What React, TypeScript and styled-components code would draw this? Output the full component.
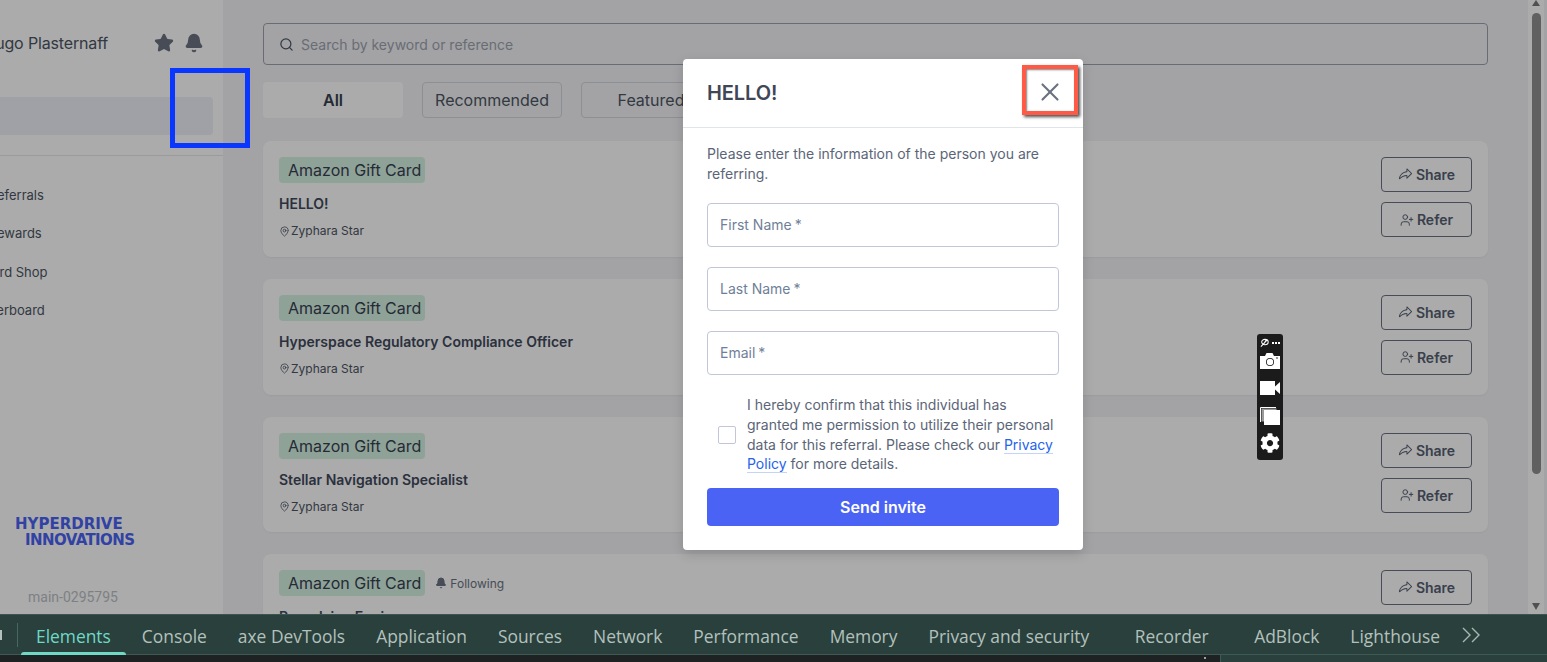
import React from 'react';
import styled, { createGlobalStyle } from 'styled-components';
import { Search, MapPin, UserPlus, X, Star, Bell } from 'lucide-react';
import { PiShareFat } from 'react-icons/pi';
import { FaCog } from 'react-icons/fa';

const GlobalStyle = createGlobalStyle`
	html, body {
		margin: 0;
		padding: 0;
		height: 100%;
		overflow: hidden;
		font-family: Inter, "Liberation Sans", sans-serif;
	}
	#root { height: 100%; }
	* { box-sizing: border-box; }
`;

type Job = { title: string; following?: boolean };

const jobs: Job[] = [
	{ title: 'HELLO!' },
	{ title: 'Hyperspace Regulatory Compliance Officer' },
	{ title: 'Stellar Navigation Specialist' },
	{ title: 'Propulsion Engineer', following: true },
];

const navItems = ['My Referrals', 'My Rewards', 'Reward Shop', 'Leaderboard'];
const fields = ['First Name', 'Last Name', 'Email'];
const tabs = ['Elements', 'Console', 'axe DevTools', 'Application', 'Sources', 'Network', 'Performance', 'Memory', 'Privacy and security', 'Recorder', 'AdBlock', 'Lighthouse'];

export default function App() {
	return (
		<Page>
			<GlobalStyle />
			<Viewport>
				<Sidebar>
					<SidebarInner>
						<UserRow>
							<UserName>Hugo Plasternaff</UserName>
							<UserIcons>
								<Star size={20} fill="#6b7280" stroke="#6b7280" />
								<Bell size={20} fill="#6b7280" stroke="#6b7280" />
							</UserIcons>
						</UserRow>
						<ActiveNav />
						<SideRule />
						<NavList>
							{navItems.map((item) => (
								<NavItem key={item}>{item}</NavItem>
							))}
						</NavList>
						<SideFooter>
							<Logo>
								<LogoLine>HYPERDRIVE</LogoLine>
								<LogoLine $indent>INNOVATIONS</LogoLine>
							</Logo>
							<Version>main-0295795</Version>
						</SideFooter>
					</SidebarInner>
				</Sidebar>
				<Main>
					<SearchBox>
						<Search size={15} color="#4b5563" strokeWidth={2} />
						<span>Search by keyword or reference</span>
					</SearchBox>
					<FilterRow>
						<FilterTab $active>All</FilterTab>
						<FilterTab>Recommended</FilterTab>
						<FilterTab>Featured</FilterTab>
					</FilterRow>
					<CardList>
						{jobs.map((job) => (
							<Card key={job.title}>
								<CardText>
									<TagRow>
										<Tag>Amazon Gift Card</Tag>
										{job.following && (
											<Following>
												<Bell size={12} fill="#6b7280" stroke="#6b7280" />
												Following
											</Following>
										)}
									</TagRow>
									<JobTitle>{job.title}</JobTitle>
									<JobPlace>
										<MapPin size={11} strokeWidth={1.7} />
										Zyphara Star
									</JobPlace>
								</CardText>
								<CardActions>
									<ActionButton>
										<PiShareFat size={15} />
										Share
									</ActionButton>
									<ActionButton>
										<UserPlus size={14} strokeWidth={1.7} />
										Refer
									</ActionButton>
								</CardActions>
							</Card>
						))}
					</CardList>
				</Main>
				<ScrollTrack>
					<ScrollArrow $up />
					<ScrollThumb />
					<ScrollArrow />
				</ScrollTrack>
				<Backdrop />
				<BlueMark />
				<Modal>
					<ModalHeader>
						<ModalTitle>HELLO!</ModalTitle>
						<CloseMark>
							<X size={30} color="#6b7280" strokeWidth={1.7} />
						</CloseMark>
					</ModalHeader>
					<ModalBody>
						<Intro>Please enter the information of the person you are referring.</Intro>
						<FieldStack>
							{fields.map((field) => (
								<Field key={field}>
									{field}
									<Required>*</Required>
								</Field>
							))}
						</FieldStack>
						<ConsentRow>
							<CheckBox />
							<ConsentText>
								I hereby confirm that this individual has granted me permission to utilize their personal data for this referral. Please check our <PolicyLink>Privacy Policy</PolicyLink> for more details.
							</ConsentText>
						</ConsentRow>
						<SendButton>Send invite</SendButton>
					</ModalBody>
				</Modal>
				<CaptureBar>
					<CaptureTop>
						<svg width="9" height="9" viewBox="0 0 10 10" fill="none" stroke="#fff" strokeWidth="1.2">
							<ellipse cx="5.5" cy="4.5" rx="3.6" ry="3" />
							<path d="M1 9.5 8 2M4 7l3-5" />
						</svg>
						<CaptureDots>
							<i />
							<i />
							<i />
						</CaptureDots>
					</CaptureTop>
					<CaptureCell>
						<svg width="20" height="16" viewBox="0 0 20 16" fill="#fff">
							<path d="M0 3h5l1.5-3h6L14 3h6v13H0z" />
							<circle cx="10" cy="9" r="4" fill="#1b1b1b" />
							<circle cx="10" cy="9" r="3.2" fill="#fff" />
							<circle cx="17" cy="5" r="0.8" fill="#1b1b1b" />
						</svg>
					</CaptureCell>
					<CaptureCell>
						<svg width="20" height="14" viewBox="0 0 20 14" fill="#fff">
							<rect x="0" y="0" width="15" height="14" />
							<path d="M15 5.5 20 1v12l-5-4.5z" />
						</svg>
					</CaptureCell>
					<CaptureCell>
						<svg width="20" height="18" viewBox="0 0 20 18">
							<path d="M0.5 15V0.5H16" fill="none" stroke="#fff" />
							<rect x="1.5" y="1.5" width="15" height="13" fill="#9a9a9a" />
							<rect x="4" y="3" width="16" height="15" fill="#fff" />
						</svg>
					</CaptureCell>
					<CaptureCell>
						<FaCog size={20} color="#fff" />
					</CaptureCell>
				</CaptureBar>
			</Viewport>
			<DevTools>
				<TabBar>
					<TabStub />
					<TabDivider />
					{tabs.map((tab, index) => (
						<DevTab key={tab} $active={index === 0} $wide={tab === 'Recorder'}>
							{tab}
						</DevTab>
					))}
					<MoreTabs>
						<svg width="20" height="16" viewBox="0 0 20 16" fill="none" stroke="#a9b7b2" strokeWidth="1.4">
							<path d="M2 1l7 7-7 7M11 1l7 7-7 7" />
						</svg>
					</MoreTabs>
				</TabBar>
				<DevPanels>
					<ConsolePane />
					<SidePane />
				</DevPanels>
			</DevTools>
		</Page>
	);
}

const Page = styled.div`
	display: flex;
	flex-direction: column;
	width: 1547px;
	height: 662px;
	overflow: hidden;
`;

const Viewport = styled.div`
	position: relative;
	display: flex;
	height: 614px;
	overflow: hidden;
	flex-shrink: 0;
	background: #f3f4f6;
`;

const Sidebar = styled.aside`
	width: 223px;
	flex-shrink: 0;
	background: #fff;
	overflow: hidden;
`;

const SidebarInner = styled.div`
	display: flex;
	flex-direction: column;
	width: 263px;
	height: 100%;
	margin-left: -40px;
`;

const UserRow = styled.div`
	display: flex;
	align-items: center;
	justify-content: space-between;
	height: 86px;
	padding: 0 19px 0 23.4px;
`;

const UserName = styled.div`
	font-size: 16px;
	letter-spacing: -0.15px;
	color: #4b5563;
`;

const UserIcons = styled.div`
	display: flex;
	gap: 10px;
`;

const ActiveNav = styled.div`
	height: 38px;
	margin: 11px 10px 0 0;
	border-radius: 4px;
	background: #eef0fa;
`;

const SideRule = styled.div`
	height: 1px;
	margin-top: 20px;
	background: #e5e7eb;
`;

const NavList = styled.div`
	display: flex;
	flex-direction: column;
	padding-top: 20px;
`;

const NavItem = styled.div`
	height: 38.4px;
	line-height: 38px;
	font-size: 13px;
	color: #4b5563;
	margin-left: 6px;
`;

const SideFooter = styled.div`
	display: flex;
	flex-direction: column;
	flex: 1;
	justify-content: flex-end;
`;

const Logo = styled.div`
	display: flex;
	flex-direction: column;
	margin-left: 55px;
	margin-bottom: 41px;
	color: #4a63f5;
`;

const LogoLine = styled.div<{ $indent?: boolean }>`
	font-family: 'DejaVu Sans', sans-serif;
	font-weight: 700;
	font-size: 15px;
	line-height: 16px;
	letter-spacing: ${(p) => (p.$indent ? '-0.6px' : '0')};
	margin-left: ${(p) => (p.$indent ? '10px' : '0')};
`;

const Version = styled.div`
	font-family: Roboto, sans-serif;
	font-size: 14px;
	line-height: 16px;
	margin: 0 0 9px 68px;
	color: #bbbfc6;
`;

const Main = styled.main`
	flex: 1;
	min-width: 0;
	padding: 23px 40px 0;
`;

const SearchBox = styled.div`
	display: flex;
	align-items: center;
	gap: 7px;
	height: 42px;
	padding-left: 15px;
	border: 1px solid #9ca3af;
	border-radius: 4px;
	font-size: 14px;
	color: #9ca3af;
`;

const FilterRow = styled.div`
	display: flex;
	gap: 19px;
	margin-top: 17px;
`;

const FilterTab = styled.div<{ $active?: boolean }>`
	display: flex;
	align-items: center;
	justify-content: center;
	width: 140px;
	height: 36px;
	border-radius: 4px;
	font-size: 16px;
	font-weight: ${(p) => (p.$active ? 600 : 400)};
	color: ${(p) => (p.$active ? '#374151' : '#4b5563')};
	background: ${(p) => (p.$active ? '#fff' : 'transparent')};
	border: ${(p) => (p.$active ? 'none' : '1px solid #d1d5db')};
`;

const CardList = styled.div`
	display: flex;
	flex-direction: column;
	gap: 22px;
	margin-top: 23px;
`;

const Card = styled.div`
	display: flex;
	flex-shrink: 0;
	justify-content: space-between;
	height: 115.8px;
	padding: 16px;
	border-radius: 8px;
	background: #fff;
	box-shadow: 0 1px 2px rgba(0, 0, 0, 0.05);
`;

const CardText = styled.div`
	display: flex;
	flex-direction: column;
	align-items: flex-start;
`;

const TagRow = styled.div`
	display: flex;
	align-items: center;
	gap: 10px;
`;

const Tag = styled.div`
	height: 26px;
	padding: 0 4px 0 9px;
	border-radius: 4px;
	background: #d6f2e3;
	font-size: 16px;
	line-height: 26px;
	color: #374151;
`;

const Following = styled.div`
	display: flex;
	align-items: center;
	gap: 3px;
	font-size: 12px;
	color: #6b7280;
`;

const JobTitle = styled.div`
	margin-top: 11px;
	font-size: 14px;
	line-height: 20px;
	font-weight: 600;
	color: #3f4a5c;
`;

const JobPlace = styled.div`
	display: flex;
	align-items: center;
	gap: 1px;
	margin-top: 9px;
	font-size: 12px;
	line-height: 16px;
	color: #4b5563;
`;

const CardActions = styled.div`
	display: flex;
	flex-direction: column;
	gap: 10px;
`;

const ActionButton = styled.div`
	display: flex;
	align-items: center;
	justify-content: center;
	gap: 3px;
	width: 91px;
	height: 35px;
	border: 1px solid #6b7280;
	border-radius: 4px;
	font-size: 14px;
	font-weight: 600;
	color: #566072;
`;

const ScrollTrack = styled.div`
	display: flex;
	flex-direction: column;
	width: 16px;
	margin-right: 3px;
	flex-shrink: 0;
	background: #fff;
`;

const ScrollArrow = styled.div<{ $up?: boolean }>`
	flex-shrink: 0;
	width: 0;
	height: 0;
	margin: ${(p) => (p.$up ? '0 auto' : 'auto auto 4px')};
	border-left: 4.5px solid transparent;
	border-right: 4.5px solid transparent;
	${(p) => (p.$up ? 'border-bottom: 6px solid #787878;' : 'border-top: 7px solid #787878;')}
`;

const ScrollThumb = styled.div`
	width: 9px;
	height: 461px;
	margin: 7px auto 0;
	border-radius: 4.5px;
	background: #8f8f8f;
`;

const Backdrop = styled.div`
	position: absolute;
	inset: 0;
	background: rgba(0, 0, 0, 0.33);
`;

const BlueMark = styled.div`
	position: absolute;
	left: 170px;
	top: 68px;
	width: 80px;
	height: 80px;
	border: 5px solid #0a37ff;
`;

const Modal = styled.div`
	position: absolute;
	left: 683px;
	top: 59px;
	width: 400px;
	height: 491px;
	border-radius: 4px;
	background: #fff;
	box-shadow: 0 4px 12px rgba(0, 0, 0, 0.15);
`;

const ModalHeader = styled.div`
	position: relative;
	display: flex;
	align-items: center;
	height: 69px;
	padding: 0 24px;
	border-bottom: 1px solid #e2e4ec;
`;

const ModalTitle = styled.div`
	font-size: 20px;
	font-weight: 600;
	letter-spacing: -0.1px;
	color: #3f4656;
`;

const CloseMark = styled.div`
	position: absolute;
	left: 339px;
	top: 6px;
	display: flex;
	align-items: center;
	justify-content: center;
	width: 56px;
	height: 50px;
	padding-top: 4px;
	border: 4px solid #ff5a45;
	box-shadow: 2px 2px 3px rgba(0, 0, 0, 0.7), inset 1px 1px 2px rgba(0, 0, 0, 0.5);
`;

const ModalBody = styled.div`
	display: flex;
	flex-direction: column;
	padding: 16px 24px 0;
`;

const Intro = styled.p`
	margin: 0;
	font-size: 14px;
	line-height: 20px;
	color: #5b6577;
`;

const FieldStack = styled.div`
	display: flex;
	flex-direction: column;
	gap: 20px;
	margin-top: 19px;
`;

const Field = styled.div`
	display: flex;
	align-items: center;
	height: 44px;
	padding: 0 12px 1px;
	border: 1px solid #c1c7d6;
	border-radius: 4px;
	font-size: 14px;
	color: #6f7f99;
`;

const Required = styled.span`
	margin-left: 3px;
`;

const ConsentRow = styled.div`
	display: flex;
	align-items: center;
	margin-top: 20px;
`;

const CheckBox = styled.div`
	width: 18px;
	height: 18px;
	flex-shrink: 0;
	margin: 0 11px;
	border: 1px solid #c1c7d6;
	border-radius: 2px;
`;

const ConsentText = styled.p`
	margin: 0;
	font-size: 14px;
	line-height: 19.8px;
	color: #5b6577;
`;

const PolicyLink = styled.span`
	color: #2563eb;
	border-bottom: 1px solid #c5d4f5;
`;

const SendButton = styled.div`
	display: flex;
	align-items: center;
	justify-content: center;
	height: 38px;
	margin-top: 14px;
	border-radius: 4px;
	background: #4a63f5;
	font-size: 16px;
	font-weight: 600;
	color: #fff;
`;

const CaptureBar = styled.div`
	position: absolute;
	left: 1257px;
	top: 334px;
	display: flex;
	flex-direction: column;
	align-items: center;
	width: 26px;
	height: 126px;
	padding-top: 4px;
	border-radius: 3px;
	background: #1b1b1b;
`;

const CaptureTop = styled.div`
	display: flex;
	align-items: center;
	gap: 3px;
	height: 9.5px;
`;

const CaptureCell = styled.div`
	display: flex;
	align-items: center;
	justify-content: center;
	height: 27.3px;
	flex-shrink: 0;
`;

const CaptureDots = styled.div`
	display: flex;
	gap: 1px;

	& > i {
		display: block;
		width: 2px;
		height: 2px;
		background: #fff;
	}
`;

const DevTools = styled.div`
	display: flex;
	flex-direction: column;
	height: 48px;
`;

const TabBar = styled.div`
	display: flex;
	align-items: center;
	height: 41px;
	flex-shrink: 0;
	background: #29403d;
	border-top: 1px solid #3a544f;
	border-bottom: 1px solid #3f5a54;
`;

const TabStub = styled.div`
	width: 2px;
	height: 10px;
	background: #b4c0bc;
`;

const TabDivider = styled.div`
	width: 1px;
	height: 24px;
	margin: 0 2.5px 0 15px;
	background: #4b6660;
`;

const DevTab = styled.div<{ $active?: boolean; $wide?: boolean }>`
	position: relative;
	display: flex;
	align-items: center;
	height: 100%;
	padding: 2px ${(p) => (p.$wide ? '30px' : '15.5px')} 0;
	font-family: 'Open Sans', sans-serif;
	font-size: 17.4px;
	color: ${(p) => (p.$active ? '#6fd9c6' : '#b4c0bc')};

	&::after {
		content: '';
		display: ${(p) => (p.$active ? 'block' : 'none')};
		position: absolute;
		left: 0;
		right: 0;
		bottom: -1px;
		height: 3px;
		border-radius: 3px 3px 0 0;
		background: #6fd9c6;
	}
`;

const MoreTabs = styled.div`
	display: flex;
	margin-left: 6px;
`;

const DevPanels = styled.div`
	display: flex;
	flex: 1;
`;

const ConsolePane = styled.div`
	position: relative;
	width: 1220px;
	background: #1f2222;

	&::after {
		content: '';
		position: absolute;
		right: 14px;
		top: 2px;
		width: 2px;
		height: 2px;
		background: #9aa5a1;
	}
`;

const SidePane = styled.div`
	flex: 1;
	background: #29403d;
	border-left: 1px solid #3f5a54;
`;
